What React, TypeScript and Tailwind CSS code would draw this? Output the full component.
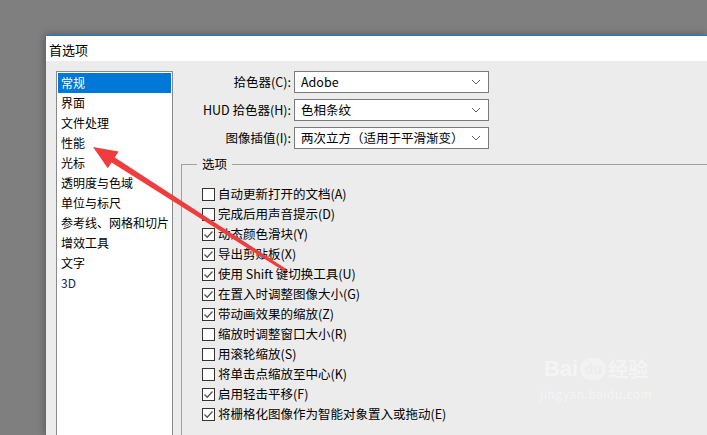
import React from 'react';

const categories = ['常规', '界面', '文件处理', '性能', '光标', '透明度与色域', '单位与标尺', '参考线、网格和切片', '增效工具', '文字', '3D'];

const selects = [
  { label: '拾色器(C):', value: 'Adobe' },
  { label: 'HUD 拾色器(H):', value: '色相条纹' },
  { label: '图像插值(I):', value: '两次立方（适用于平滑渐变）' },
];

const options = [
  { text: '自动更新打开的文档(A)', checked: false },
  { text: '完成后用声音提示(D)', checked: false },
  { text: '动态颜色滑块(Y)', checked: true },
  { text: '导出剪贴板(X)', checked: true },
  { text: '使用 Shift 键切换工具(U)', checked: true },
  { text: '在置入时调整图像大小(G)', checked: true },
  { text: '带动画效果的缩放(Z)', checked: true },
  { text: '缩放时调整窗口大小(R)', checked: false },
  { text: '用滚轮缩放(S)', checked: false },
  { text: '将单击点缩放至中心(K)', checked: false },
  { text: '启用轻击平移(F)', checked: true },
  { text: '将栅格化图像作为智能对象置入或拖动(E)', checked: true },
];

const Checkbox: React.FC<{ checked: boolean }> = ({ checked }) => (
  <div className="w-[13px] h-[13px] border border-[#333] bg-white flex items-center justify-center shrink-0">
    {checked && (
      <svg width="11" height="11" viewBox="0 0 11 11">
        <path d="M1.5 5.5 L4.2 8.2 L9.5 2.5" fill="none" stroke="#555" strokeWidth="1.3" />
      </svg>
    )}
  </div>
);

const Chevron = () => (
  <svg width="10" height="6" viewBox="0 0 10 6" className="shrink-0">
    <path d="M1 1 L5 5 L9 1" fill="none" stroke="#606060" strokeWidth="1" />
  </svg>
);

export default function App() {
  return (
    <div
      className="relative w-[707px] h-[435px] overflow-hidden bg-[#7f7f7f] pt-[35px] pl-[45px] text-[12.5px] text-black"
      style={{ fontFamily: '"Noto Sans CJK SC", "Liberation Sans", sans-serif' }}
    >
      <div className="h-full flex flex-col bg-white border-l border-t border-[#1a7fd6] shadow-[0_0_8px_rgba(0,0,0,0.35)]">
        {/* title bar */}
        <div className="h-[25px] flex items-center pl-[3px] pt-[1px] leading-none text-[13px]">首选项</div>

        <div className="flex-1 flex bg-[#ececec] pl-[10px] pt-[10px]">
          {/* category list */}
          <div className="w-[117px] bg-white border-l border-t border-r border-[#8a8a8a] pt-px px-px text-[12px]">
            {categories.map((c, i) => (
              <div
                key={c}
                className={`h-[20px] flex items-center pl-[3px] leading-none whitespace-nowrap ${
                  i === 0 ? 'bg-[#0078d7] text-white' : i === 10 ? 'text-[#22224a]' : ''
                }`}
              >
                {c}
              </div>
            ))}
          </div>

          {/* right side */}
          <div className="flex-1 flex flex-col pl-[8px]">
            <div className="flex flex-col gap-[6px]">
              {selects.map(s => (
                <div key={s.label} className="flex items-center">
                  <div className="w-[113px] text-right pr-[3px] leading-none whitespace-nowrap">{s.label}</div>
                  <div className="w-[195px] h-[22px] border border-[#7a7a7a] bg-white flex items-center justify-between pl-[6px] pr-[7px] leading-none">
                    <span className="whitespace-nowrap">{s.value}</span>
                    <Chevron />
                  </div>
                </div>
              ))}
            </div>

            {/* options group */}
            <div className="relative mt-[15px] flex-1 border-l border-t border-[#a0a0a0] pl-[20px] pt-[19px]">
              <div className="absolute -top-[9px] left-[15px] bg-[#ececec] px-[5px] leading-none h-[16px] flex items-center">选项</div>
              <div className="flex flex-col">
                {options.map(o => (
                  <div key={o.text} className="h-[20px] flex items-center gap-[3px] leading-none whitespace-nowrap">
                    <Checkbox checked={o.checked} />
                    <span>{o.text}</span>
                  </div>
                ))}
              </div>
            </div>
          </div>
        </div>
      </div>

      {/* red annotation arrow */}
      <svg className="absolute left-0 top-0 pointer-events-none" width="707" height="435">
        <polygon points="93,147 118.6,151.5 114.8,157.4 285.8,268.7 284.2,271.3 111.6,162.4 107.8,168.3" fill="#f03c3c" />
      </svg>

      {/* watermark */}
      <div className="absolute left-[540px] top-[358px] flex flex-col items-center text-[#f4f4f4] leading-none pointer-events-none">
        <div className="flex items-end gap-[2px] font-bold text-[22px]" style={{ fontFamily: '"Liberation Sans", "Noto Sans CJK SC", sans-serif' }}>
          <span>Bai</span>
          <span className="text-[14px] w-[26px] h-[22px] rounded-full bg-[#f2f2f2] text-[#ececec] flex items-center justify-center">du</span>
          <span className="text-[20px]">经验</span>
        </div>
        <div className="mt-[8px] text-[12px] tracking-[0.5px]">jingyan.baidu.com</div>
      </div>
    </div>
  );
}
